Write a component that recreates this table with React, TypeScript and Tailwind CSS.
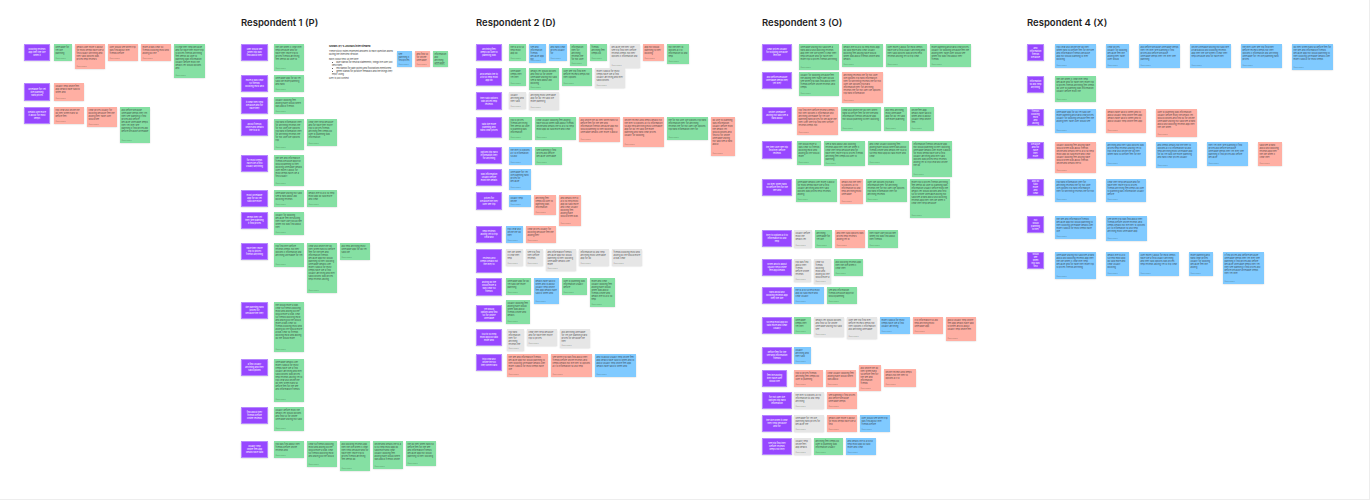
import React from "react"

type Tone = "G" | "R" | "B" | "Y"
type Note = [number, number, Tone, number?]
type Row = { y: number; ph?: number; pw?: number; lead?: number; notes: Note[] }
type Section = { x: number; title?: string; pw: number; gap: number; lead: number; rows: Row[] }

const tone: Record<Tone, string> = {
    G: "bg-[#85e0a3]",
    R: "bg-[#ffafa3]",
    B: "bg-[#80caff]",
    Y: "bg-[#e6e6e6]",
}

const WORDS = "the user said they would like to see more options when planning a trip and it was hard to find clear information about prices so they usually ask friends for help before booking anything online because most reviews feel unreliable and the app keeps asking for details they do not have yet".split(" ")

function filler(seed: number, chars: number) {
    let out = ""
    let i = seed * 7
    while (out.length < chars) {
        out += WORDS[i % WORDS.length] + " "
        i += 3 + (seed % 5)
    }
    return out.trim()
}

const sections: Section[] = [
    {
        x: 24, pw: 26, gap: 3, lead: 4,
        rows: [
            { y: 44, notes: [[18, 17, "G"], [30, 25, "R"], [30, 17, "R"], [30, 17, "R"], [31, 34, "G"]] },
            { y: 83, ph: 18, notes: [[30, 18, "R"]] },
            { y: 107, notes: [[30, 17, "R"], [30, 20, "R"], [30, 36, "G"]] },
        ],
    },
    {
        x: 241, title: "Respondent 1 (P)", pw: 27, gap: 3, lead: 6,
        rows: [
            { y: 44, notes: [[30, 27, "G"]] },
            { y: 75, notes: [[30, 17, "G"]] },
            { y: 97, notes: [[30, 17, "G"]] },
            { y: 119, notes: [[30, 31, "G"], [30, 27, "G"]] },
            { y: 155, notes: [[30, 31, "G"]] },
            { y: 190, notes: [[30, 17, "G"], [30, 17, "G"]] },
            { y: 212, notes: [[30, 23, "G"]] },
            { y: 243, notes: [[30, 24, "G"], [30, 50, "G"], [30, 17, "G"]] },
            { y: 302, notes: [[30, 50, "G"]] },
            { y: 359, notes: [[30, 43, "G"]] },
            { y: 407, notes: [[30, 24, "G"]] },
            { y: 441, notes: [[30, 17, "G"], [30, 26, "G"], [30, 30, "G"], [30, 28, "G"], [30, 25, "G"]] },
        ],
    },
    {
        x: 476, title: "Respondent 2 (D)", pw: 26, gap: 3, lead: 7,
        rows: [
            { y: 44, notes: [[17, 17, "G"], [17, 19, "B"], [18, 17, "B"], [17, 22, "G"], [17, 17, "G"], [30, 24, "Y"], [21, 17, "R"], [22, 20, "G"]] },
            { y: 68, ph: 18, notes: [[17, 18, "G"], [30, 22, "G"], [30, 18, "G"], [30, 20, "Y"]] },
            { y: 92, ph: 18, notes: [[17, 17, "Y"], [30, 18, "Y"]] },
            { y: 117, ph: 21, notes: [[23, 23, "G"], [41, 23, "G"], [41, 25, "R"], [41, 30, "R"], [41, 23, "G"], [24, 39, "R"]] },
            { y: 147, notes: [[23, 18, "B"], [27, 18, "G"]] },
            { y: 169, notes: [[22, 21, "B"]] },
            { y: 192, ph: 18, notes: [[22, 12, "B", 3], [22, 20, "R", 3], [22, 31, "R", 3]] },
            { y: 226, lead: 4, notes: [[17, 17, "B"], [30, 17, "R"]] },
            { y: 249, ph: 24, lead: 4, notes: [[17, 17, "Y"], [17, 17, "Y"], [30, 22, "Y"], [30, 17, "Y"], [30, 17, "Y"]] },
            { y: 278, ph: 18, lead: 4, notes: [[25, 17, "G"], [25, 26, "B"], [25, 17, "G"], [25, 29, "G"]] },
            { y: 305, lead: 4, notes: [[24, 24, "G", -5]] },
            { y: 329, lead: 5, notes: [[17, 22, "Y"], [30, 17, "Y"], [30, 19, "Y"]] },
            { y: 354, lead: 5, notes: [[41, 23, "R"], [41, 23, "R"], [41, 23, "B"]] },
        ],
    },
    {
        x: 762, title: "Respondent 3 (O)", pw: 30, gap: 3, lead: 5,
        rows: [
            { y: 44, lead: 7, notes: [[40, 26, "G"], [41, 23, "G"], [41, 23, "G"], [41, 23, "G"]] },
            { y: 72, lead: 7, notes: [[40, 24, "G"], [41, 31, "R"]] },
            { y: 107, notes: [[41, 28, "R"], [40, 24, "G"], [23, 24, "G"], [24, 24, "G"]] },
            { y: 141, ph: 18, notes: [[24, 24, "G"], [41, 25, "G"], [41, 24, "G"], [40, 36, "G"]] },
            { y: 179, lead: 4, notes: [[41, 23, "G"], [23, 25, "R"], [41, 23, "G"], [40, 39, "G"]] },
            { y: 230, lead: 2, notes: [[18, 18, "Y"], [17, 18, "G"], [30, 18, "R"], [30, 18, "G"]] },
            { y: 259, lead: 2, notes: [[17, 23, "Y"], [17, 25, "Y"], [29, 17, "G"]] },
            { y: 287, lead: 2, notes: [[30, 17, "B"], [30, 17, "G"]] },
            { y: 317, lead: 2, notes: [[17, 17, "G"], [30, 20, "Y"], [30, 22, "Y"], [30, 17, "B"], [30, 17, "R"], [30, 24, "R"]] },
            { y: 347, lead: 2, notes: [[17, 17, "B"]] },
            { y: 370, pw: 25, lead: 7, notes: [[29, 17, "R"], [30, 17, "R"], [22, 26, "R", -5], [32, 18, "R", -1]] },
            { y: 392, lead: 2, notes: [[30, 17, "Y"], [30, 17, "R"]] },
            { y: 415, lead: 2, notes: [[30, 17, "Y"], [30, 17, "R"], [30, 17, "B"]] },
            { y: 438, lead: 2, notes: [[17, 17, "Y"], [29, 17, "G"], [30, 17, "B"]] },
        ],
    },
    {
        x: 1027, title: "Respondent 4 (X)", pw: 17, gap: 10, lead: 11,
        rows: [
            { y: 44, notes: [[41, 24, "B"], [23, 24, "B"], [41, 24, "B"], [41, 24, "B"], [41, 24, "B"], [41, 26, "B"]] },
            { y: 76, notes: [[41, 26, "G"]] },
            { y: 109, notes: [[41, 24, "B"], [40, 24, "R"], [41, 28, "R"]] },
            { y: 142, notes: [[41, 31, "R"], [40, 24, "B"], [41, 26, "B"], [41, 24, "B"], [24, 24, "R"]] },
            { y: 179, notes: [[41, 23, "B"], [40, 23, "B"]] },
            { y: 216, notes: [[41, 23, "B"], [41, 25, "B"]] },
            { y: 252, notes: [[41, 27, "B"], [23, 24, "B"], [40, 24, "B"], [24, 24, "B"], [41, 32, "B"]] },
        ],
    },
]

function Sticky({ w, h, c, seed, dy }: { w: number; h: number; c: Tone; seed: number; dy?: number }) {
    const lines = Math.max(1, Math.floor((h - 7) / 3))
    const chars = Math.round(lines * ((w - 3) / 1.1) * 0.8)
    return (
        <div
            className={`shrink-0 relative overflow-hidden ${tone[c]} shadow-[0_0.5px_1.5px_rgba(0,0,0,0.18)]`}
            style={{ width: w, height: h, marginTop: dy ?? 0 }}
        >
            <p className="px-[1.5px] pt-[2px] text-[2.2px] leading-[3px] text-[#1e1e1e]/80 break-words">
                { filler(seed, chars) }
            </p>
            <span className="absolute left-[1.5px] bottom-[1.5px] text-[1.8px] leading-none text-black/40">
                Anonymous
            </span>
        </div>
    )
}

function Topic({ w, h, seed }: { w: number; h: number; seed: number }) {
    return (
        <div
            className="shrink-0 flex items-center justify-center px-[3px] bg-[#9747ff] border border-[#b688ff] shadow-[0_0.5px_1.5px_rgba(0,0,0,0.2)]"
            style={{ width: w, height: h }}
        >
            <p className="text-center text-[2.2px] leading-[3px] text-white">
                { filler(seed + 11, Math.round(w * 1.6)) }
            </p>
        </div>
    )
}

function Legend() {
    return (
        <div className="absolute left-[329px] top-[45px] w-[64px]">
            <p className="text-[2.6px] leading-[3.5px] font-bold text-[#1e1e1e]">Shows (P)'s Jounals interviewed</p>
            <p className="mt-[1.5px] text-[2.2px] leading-[3px] text-[#333]">
                These sticky notes represent answers to each question asked during the interview session.
            </p>
            <p className="mt-[1.5px] text-[2.2px] leading-[3px] text-[#333]">Each colour tells us the tone:</p>
            <ul className="pl-[3px] text-[2.2px] leading-[3px] text-[#333] list-disc list-inside">
                <li>blue stands for neutral statements, things the user just describes</li>
                <li>red stands for pain points and frustrations mentioned</li>
                <li>green stands for positive feedback and the things they enjoy using</li>
            </ul>
            <p className="mt-[1.5px] text-[2.2px] leading-[3px] text-[#333]">Grey is just context.</p>
        </div>
    )
}

function LegendStickies() {
    return (
        <div className="absolute left-[397px] top-[51px] flex gap-[3px]">
            <Sticky w={15} h={16} c="B" seed={1} />
            <Sticky w={15} h={16} c="R" seed={2} />
            <Sticky w={15} h={16} c="G" seed={3} />
        </div>
    )
}

export default function App() {
    let seed = 0
    return (
        <div className="w-[1370px] h-[500px] relative overflow-hidden bg-white border-r border-b border-[#ededed] font-['Inter',sans-serif]">
            { sections.map((s, si) => (
                <div key={si} className="absolute top-0" style={{ left: s.x }}>
                    { s.title && (
                        <p className="absolute top-[17px] left-0 whitespace-nowrap text-[9.5px] leading-[12px] font-semibold text-[#1e1e1e]">
                            { s.title }
                        </p>
                    ) }
                    { s.rows.map((r, ri) => {
                        seed += 1
                        return (
                            <div key={ri} className="absolute left-0 flex items-start" style={{ top: r.y }}>
                                <Topic w={r.pw ?? s.pw} h={r.ph ?? 17} seed={seed} />
                                <div className="flex items-start" style={{ marginLeft: r.lead ?? s.lead, gap: s.gap }}>
                                    { r.notes.map((n, ni) => (
                                        <Sticky key={ni} w={n[0]} h={n[1]} c={n[2]} dy={n[3]} seed={seed * 13 + ni} />
                                    )) }
                                </div>
                            </div>
                        )
                    }) }
                </div>
            )) }
            <Legend />
            <LegendStickies />
        </div>
    )
}
